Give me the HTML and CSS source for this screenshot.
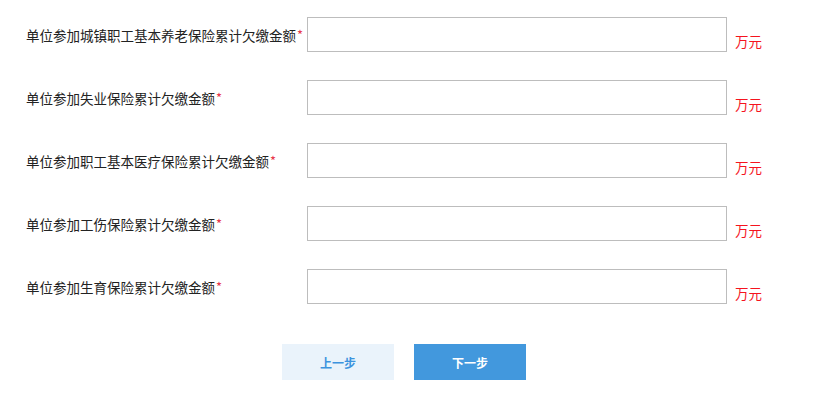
FILE: index.html
```html
<!DOCTYPE html>
<html lang="zh-CN">
<head>
<meta charset="utf-8">
<link rel="stylesheet" href="styles.css">
</head>
<body>
<div class="form">
  <div class="row">
    <label class="label">单位参加城镇职工基本养老保险累计欠缴金额<span class="req">*</span></label>
    <input class="field" type="text">
    <span class="unit">万元</span>
  </div>
  <div class="row">
    <label class="label">单位参加失业保险累计欠缴金额<span class="req">*</span></label>
    <input class="field" type="text">
    <span class="unit">万元</span>
  </div>
  <div class="row">
    <label class="label">单位参加职工基本医疗保险累计欠缴金额<span class="req">*</span></label>
    <input class="field" type="text">
    <span class="unit">万元</span>
  </div>
  <div class="row">
    <label class="label">单位参加工伤保险累计欠缴金额<span class="req">*</span></label>
    <input class="field" type="text">
    <span class="unit">万元</span>
  </div>
  <div class="row">
    <label class="label">单位参加生育保险累计欠缴金额<span class="req">*</span></label>
    <input class="field" type="text">
    <span class="unit">万元</span>
  </div>
  <div class="actions">
    <button class="btn btn-prev" type="button">上一步</button>
    <button class="btn btn-next" type="button">下一步</button>
  </div>
</div>
</body>
</html>
```

FILE: styles.css
```css
html, body {
  margin: 0;
  padding: 0;
  background: #fff;
}
body {
  font-family: "Noto Sans CJK SC", "Noto Sans", sans-serif;
  color: #222;
}
.form {
  padding-top: 17px;
  display: flex;
  flex-direction: column;
  gap: 28px;
}
.row {
  display: flex;
  align-items: flex-end;
  height: 35px;
}
.label {
  box-sizing: border-box;
  width: 307px;
  padding-left: 26px;
  align-self: center;
  font-size: 13.5px;
  line-height: 18px;
  white-space: nowrap;
  color: #222;
}
.req {
  color: #e8364a;
  font-size: 13px;
  line-height: 1;
  vertical-align: 1px;
  margin-left: 1px;
}
.field {
  box-sizing: border-box;
  width: 420px;
  height: 35px;
  margin: 0;
  border: 1px solid #bdbdbd;
  border-radius: 0;
  background: #fff;
  outline: none;
  padding: 0 8px;
}
.unit {
  margin-left: 8px;
  font-size: 13.5px;
  line-height: 16px;
  margin-bottom: 3px;
  color: #f5141e;
}
.actions {
  display: flex;
  gap: 20px;
  padding-left: 282px;
  margin-top: 12px;
}
.btn {
  width: 112px;
  height: 36px;
  border: none;
  border-radius: 0;
  font-family: "Noto Sans CJK SC", "Noto Sans", sans-serif;
  font-size: 12px;
  font-weight: bold;
  cursor: pointer;
  padding: 0;
}
.btn-prev {
  background: #eaf3fb;
  color: #3d93de;
}
.btn-next {
  background: #4298dd;
  color: #fff;
}
```
